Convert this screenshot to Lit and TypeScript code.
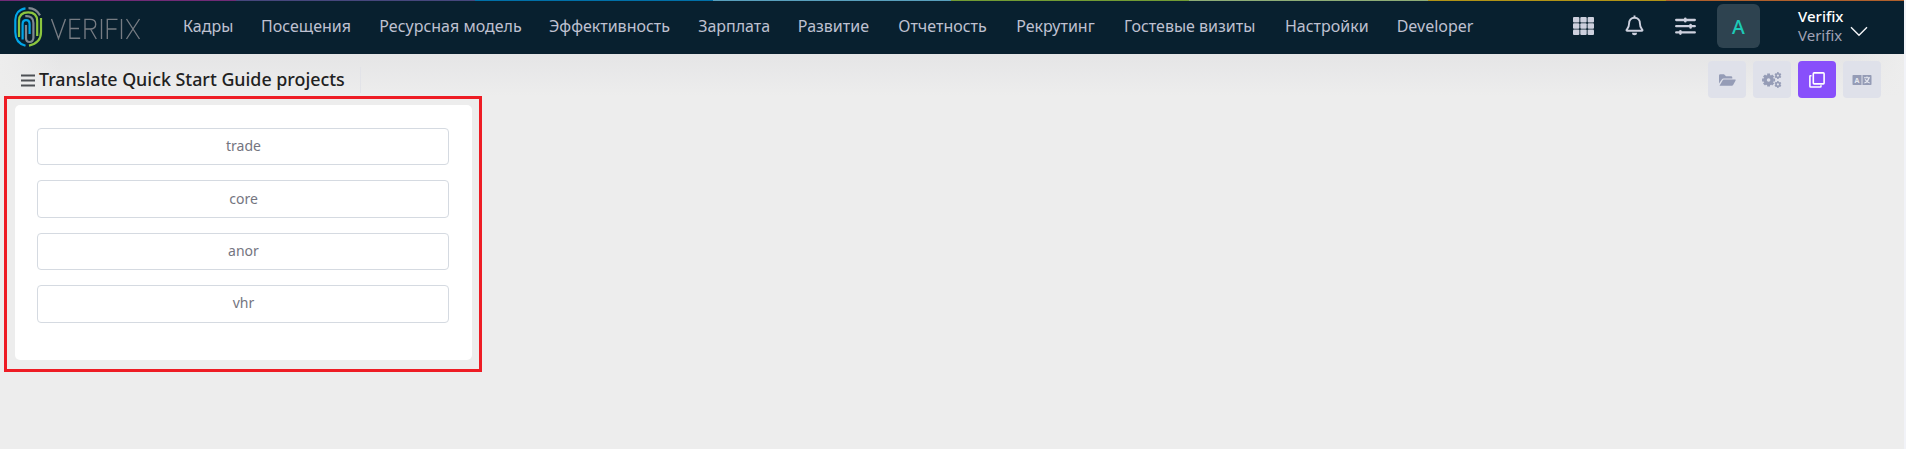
import { LitElement, html, css, svg } from "lit";
import { customElement } from "lit/decorators.js";

const MENU = ["Кадры", "Посещения", "Ресурсная модель", "Эффективность", "Зарплата", "Развитие", "Отчетность", "Рекрутинг", "Гостевые визиты", "Настройки", "Developer"];
const PROJECTS = ["trade", "core", "anor", "vhr"];

const cog = (cx: number, cy: number, r: number, hole: number, teeth: number, tw: number, tl: number) => svg`
  <g transform="translate(${cx} ${cy})" fill="none" stroke="currentColor">
    <circle r=${(r + hole) / 2} stroke-width=${r - hole}></circle>
    ${Array.from({ length: teeth }, (_, i) => svg`<path d="M0 ${-r + 0.5}V${-r - tl}" stroke-width=${tw} transform="rotate(${(360 / teeth) * i})"></path>`)}
  </g>`;

@customElement("app-topbar")
class AppTopbar extends LitElement {
  static styles = css`
    :host { display: block; }
    .stripe { height: 1px; display: grid; grid-template-columns: 236px 239px 238px 238px 238px 239px 238px 238px; }
    .c1 { background: #702b77; } .c2 { background: #46477d; } .c3 { background: #0070a8; } .c4 { background: #58a0bd; }
    .c5 { background: #729c34; } .c6 { background: #8ead77; } .c7 { background: #b19316; } .c8 { background: #b0602c; }
    .bar { height: 53px; background: #08202f; display: flex; align-items: center; }
    .logo { width: 130px; height: 44px; margin-left: 13px; margin-top: -2px; flex: none; }
    .menu { display: grid; grid-template-columns: 78px 118.3px 169.7px 149.2px 99.7px 100.4px 118px 107.7px 161px 111.7px 80px; margin-left: 40px; margin-top: -3px; color: #bfc1d1; font-size: 16px; line-height: 24px; white-space: nowrap; }
    .tools { display: flex; align-items: center; margin-left: auto; color: #cdd0de; }
    .tools svg { display: block; }
    .grid { margin: -4px 31px 0 0; }
    .bell { margin: -4px 31px 0 0; }
    .sliders { margin: -4px 21px 0 0; }
    .avatar { width: 43px; height: 44px; border-radius: 6px; background: #2e4350; color: #1dc9b7; font-size: 19.5px; font-weight: 500; display: flex; align-items: center; justify-content: center; margin-right: 38px; margin-top: -3px; }
    .user { font-size: 15px; line-height: 19px; color: #a0a2b5; margin-top: -3px; width: 45px; }
    .user b { display: block; color: #fff; font-weight: 500; }
    .chev { margin: 8px 36px 0 7px; }
  `;
  render() {
    return html`
      <div class="stripe">${[1, 2, 3, 4, 5, 6, 7, 8].map((n) => html`<i class="c${n}"></i>`)}</div>
      <div class="bar">
        <svg class="logo" viewBox="13 4 130 44" fill="none" stroke-width="2.2">
          <g stroke="#00a5e8">
            <path d="M25.5 7.3C19 8.3 15.3 13 15.3 19V31C15.3 38.5 19 43 25.5 44.8"/>
            <path d="M22.6 38.5V23.2Q22.6 19.2 26.1 19.2Q29.6 19.2 29.6 23.2V33"/>
          </g>
          <g stroke="#8cc63f">
            <path d="M19 36V20Q19 11.4 28.2 11.4Q37.2 11.4 37.2 20V35"/>
            <path d="M41 17V31Q41 42 29 44.6"/>
          </g>
          <g stroke="#808890">
            <path d="M28.5 7.2Q36 7.2 40 14.4"/>
            <path d="M25.3 15.2Q33.4 14.5 33.4 22V37Q33 41 29.5 41Q26 41 26 37V24"/>
          </g>
          <g stroke="#777c83" stroke-width="1.35">
            <path d="M51.5 18L58.5 37.5L65.5 18"/>
            <path d="M80.2 18.4H70V37.2H80.2M70 27.5H79"/>
            <path d="M85 38V18.4H90Q95.7 18.4 95.7 23.2Q95.7 28 90 28H85M90.5 28L96.3 38"/>
            <path d="M101.5 18V38"/>
            <path d="M107.3 38V18.4H117.5M107.3 28H116.5"/>
            <path d="M121.5 18V38"/>
            <path d="M126.5 18L139.5 38M139.5 18L126.5 38"/>
          </g>
        </svg>
        <nav class="menu">${MENU.map((m) => html`<span>${m}</span>`)}</nav>
        <div class="tools">
          <svg class="grid" width="21" height="18" fill="currentColor">
            ${[0, 6.3, 12.6].map((y) => [0, 7.3, 14.6].map((x) => svg`<rect x=${x} y=${y} width="6.4" height="5.4" rx="1"></rect>`))}
          </svg>
          <svg class="bell" width="19" height="21" viewBox="0 0 19 21" fill="none" stroke="currentColor" stroke-width="1.9" stroke-linejoin="round">
            <path d="M9.5 2.7C6 2.7 4.1 5.2 4.1 8.2C4.1 12.3 2.8 13.2 1.6 14.8Q1.2 15.8 2.2 15.8H16.8Q17.8 15.8 17.4 14.8C16.2 13.2 14.9 12.3 14.9 8.2C14.9 5.2 13 2.7 9.5 2.7Z"/>
            <path d="M9.5 .5V3"/><path d="M7 17.8H12Q12 20.3 9.5 20.3Q7 20.3 7 17.8Z" fill="currentColor" stroke="none"/>
          </svg>
          <svg class="sliders" width="21" height="18" viewBox="0 0 21 18" fill="none" stroke="currentColor" stroke-linecap="round">
            <path stroke-width="2.3" d="M1.2 3H19.8M1.2 9.2H19.8M1.2 15.4H19.8"/>
            <path stroke-width="2.6" d="M10.3 1.8V4.2M15.6 8V10.4M5.4 14.2V16.6"/>
          </svg>
          <div class="avatar">A</div>
          <div class="user"><b>Verifix</b>Verifix</div>
          <svg class="chev" width="18" height="11" viewBox="0 0 18 11" fill="none" stroke="#f4f5f8" stroke-width="1.4"><path d="M1 1.2L9 9.2L17 1.2"/></svg>
        </div>
      </div>`;
  }
}

@customElement("app-root")
class AppRoot extends LitElement {
  static styles = css`
    * { box-sizing: border-box; }
    :host { display: block; width: 1906px; height: 449px; overflow: hidden; background: #f2f3f8; font-family: "Noto Sans", sans-serif; }
    .page { width: 1904px; height: 449px; background: #ededed; }
    .sub { height: 42px; display: flex; align-items: center; padding: 0 23px 0 21px; background: linear-gradient(90deg, #ededed, transparent 60px, transparent 1850px, #ededed), linear-gradient(#e5e5e6, #ededed); }
    .burger { display: block; margin-top: 10px; }
    h1 { margin: 7px 0 0 4px; font-size: 17.85px; line-height: 26px; font-weight: 500; color: #212121; white-space: nowrap; }
    .sep { width: 1px; height: 26px; margin: 10px 0 0 15px; background: #e2e3e8; }
    .actions { margin: 9px 0 0 auto; display: flex; gap: 7px; }
    .btn { width: 38px; height: 37px; border-radius: 4px; background: #dfe1ea; color: #959cb6; display: flex; align-items: center; justify-content: center; }
    .on { background: #884ffb; color: #fff; }
    .letters { font-size: 7px; font-weight: 700; font-family: "Noto Sans", "Noto Sans CJK SC", sans-serif; }
    .frame { width: 478px; height: 276px; margin-left: 4px; border: 3px solid #ee1c24; padding: 6px 7px 9px 8px; }
    .card { height: 255px; border-radius: 5px; background: #fff; padding: 23px 23px 23px 22px; display: flex; flex-direction: column; gap: 15px; }
    .item { height: 37.4px; flex: none; border: 1px solid #d5dae1; border-radius: 4px; color: #74757f; font-size: 14px; line-height: 20px; display: flex; align-items: center; justify-content: center; padding: 0 0 0.8px 1px; }
  `;
  render() {
    return html`
      <div class="page">
        <app-topbar></app-topbar>
        <div class="sub">
          <svg class="burger" width="14" height="13" fill="none" stroke="#4d5055" stroke-width="2"><path d="M0 1.5H14M0 6.5H14M0 11.5H14"/></svg>
          <h1>Translate Quick Start Guide projects</h1>
          <div class="sep"></div>
          <div class="actions">
            <div class="btn"><svg width="18" height="14" viewBox="0 0 18 14" fill="currentColor"><path d="M1 10.5V2.5Q1 1.2 2.3 1.2H6L8 3.2H13Q14.3 3.2 14.3 4.5V5.5H5.6Q4.4 5.5 3.8 6.5ZM1.5 12.7L4.7 7.2Q5 6.6 5.8 6.6H17.2Q18 6.7 17.6 7.5L15.1 12Q14.7 12.7 13.8 12.7Z"/></svg></div>
            <div class="btn"><svg width="20" height="16" viewBox="0 0 20 16">
              ${cog(6.6, 8, 5.2, 1.8, 8, 2.9, 1.3)}${cog(15.9, 3.6, 2.7, 1.1, 6, 1.5, 0.8)}${cog(15.9, 12.4, 2.7, 1.1, 6, 1.5, 0.8)}
            </svg></div>
            <div class="btn on"><svg width="16" height="16" viewBox="0 0 16 16" fill="none" stroke="currentColor" stroke-width="1.6" stroke-linejoin="round"><rect x="4.3" y=".9" width="10.8" height="11" rx=".8"/><path d="M2.5 3.7H1.3Q.9 3.7 .9 4.3V14.2Q.9 15 1.7 15H11.2Q12 15 12 14.2V13.3"/></svg></div>
            <div class="btn"><svg width="20" height="12" viewBox="0 0 20 12"><path fill="currentColor" d="M1.3 1H9.5V11H1.3Q.5 11 .5 10.2V1.8Q.5 1 1.3 1ZM10.5 1H18.7Q19.5 1 19.5 1.8V10.2Q19.5 11 18.7 11H10.5Z"/><text class="letters" x="5" y="8.6" text-anchor="middle" fill="#e6e8f0">A</text><path d="M12 3.8H18M15 2.4V3.8M17 4Q16 7.8 12.4 9M13 5.3Q14.5 8 17.7 9" fill="none" stroke="#e6e8f0" stroke-width="1.1"/></svg></div>
          </div>
        </div>
        <div class="frame">
          <div class="card">${PROJECTS.map((p) => html`<div class="item">${p}</div>`)}</div>
        </div>
      </div>`;
  }
}
